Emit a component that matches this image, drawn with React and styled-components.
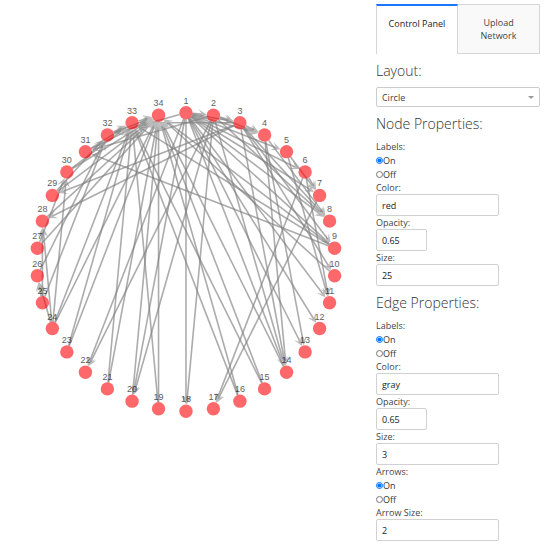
import React, { useState } from 'react'
import styled, { createGlobalStyle } from 'styled-components'

const GlobalStyle = createGlobalStyle`
* {
    box-sizing: border-box;
}

body {
    margin: 0;
    background-color: white;
    color: #444;
    font-family: "Open Sans", sans-serif;
    font-size: 9px;
    line-height: 13px;
}
`

const Page = styled.div`
display: grid;
grid-template-columns: 68% 30%;
column-gap: 4px;
align-items: start;
`

const Graph = styled.svg`
display: block;
width: 100%;
height: auto;
font-family: "Liberation Sans", sans-serif;
font-size: 9px;
`

const Panel = styled.aside`
padding-top: 4px;
`

const Tabs = styled.div`
display: flex;
`

const Tab = styled.button`
flex: 0 0 50%;
display: flex;
justify-content: center;
align-items: flex-start;
padding: 11px 10px;
border: 1px solid #d6d6d6;
border-left-width: ${(p) => (p.$active ? '1px' : '0')};
background-color: #f9f9f9;
color: #444;
font: inherit;
cursor: pointer;

${(p) => p.$active && `
    border-top: 2px solid #1975fa;
    border-bottom: 0;
    background-color: white;
    color: #222;
`}
`

const Title = styled.h2`
margin: 7px 0 6px;
font-size: 14px;
font-weight: 300;
line-height: 20px;
color: #333;
`

const SelectBox = styled.div`
position: relative;

&::after {
    content: '';
    position: absolute;
    top: 9px;
    right: 6px;
    border: 3px solid transparent;
    border-top-color: #999;
    border-bottom: 0;
    pointer-events: none;
}
`

const Select = styled.select`
display: block;
appearance: none;
width: 100%;
height: 20px;
padding: 0 5px;
border: 1px solid #ccc;
border-radius: 2px;
background-color: white;
color: #444;
font: inherit;
`

const Label = styled.label`
display: block;
`

const Input = styled.input`
display: block;
width: ${(p) => (p.$short ? '31%' : '75%')};
height: 22px;
padding: 0 5px;
border: 1px solid #d1d1d1;
border-radius: 2px;
background-color: white;
color: #222;
font: inherit;
`

const Options = styled.fieldset`
margin: 0;
padding: 0;
border: 0;
min-width: 0;
`

const Legend = styled.legend`
padding: 0;
`

const Option = styled.label`
display: flex;
align-items: center;
height: 14px;
color: #333;
`

const Radio = styled.input`
width: 7px;
height: 7px;
margin: 0;
accent-color: #0075ff;
`

const COUNT = 34
const CENTER_X = 186
const CENTER_Y = 262
const RADIUS = 149.3
const NODE_RADIUS = 6.7

// friendships of the karate club, source -> targets
const links = {
    1: [2, 3, 4, 5, 6, 7, 8, 9, 11, 12, 13, 14, 18, 20, 22, 32],
    2: [3, 4, 8, 14, 18, 20, 22, 31],
    3: [4, 8, 9, 10, 14, 28, 29, 33],
    4: [8, 13, 14],
    5: [7, 11],
    6: [7, 11, 17],
    7: [17],
    9: [31, 33, 34],
    10: [34],
    14: [34],
    15: [33, 34],
    16: [33, 34],
    19: [33, 34],
    20: [34],
    21: [33, 34],
    23: [33, 34],
    24: [26, 28, 30, 33, 34],
    25: [26, 28, 32],
    26: [32],
    27: [30, 34],
    28: [34],
    29: [32, 34],
    30: [33, 34],
    31: [33, 34],
    32: [33, 34],
    33: [34],
}

const nodes = Array.from({ length: COUNT }, (_, i) => {
    const angle = (2 * Math.PI * i) / COUNT
    return {
        id: i + 1,
        x: CENTER_X + RADIUS * Math.sin(angle),
        y: CENTER_Y - RADIUS * Math.cos(angle),
    }
})

const edges = Object.entries(links).flatMap(([from, targets]) =>
    targets.map((to) => ({ from: nodes[from - 1], to: nodes[to - 1] }))
)

const Edge = ({ from, to }) => {
    const dx = to.x - from.x
    const dy = to.y - from.y
    const length = Math.hypot(dx, dy)
    const turn = (Math.atan2(dy, dx) * 180) / Math.PI
    const tip = length - NODE_RADIUS

    return (
        <g transform={`translate(${from.x} ${from.y}) rotate(${turn})`}>
            <path d={`M${NODE_RADIUS} 0H${tip - 3}`} stroke="gray" strokeWidth="1.6" opacity="0.65" />
            <path d={`M${tip} 0l-9 -4.6l4.5 4.6l-4.5 4.6z`} fill="#bbb" />
        </g>
    )
}

const Network = () => (
    <Graph viewBox="0 0 372 524" role="img" aria-label="Network">
        {edges.map((e) => (
            <Edge key={`${e.from.id}-${e.to.id}`} from={e.from} to={e.to} />
        ))}
        {nodes.map((n) => (
            <g key={n.id}>
                <circle cx={n.x} cy={n.y} r={NODE_RADIUS} fill="#ff0408" opacity="0.6" />
                <text x={n.x} y={n.y - 9} textAnchor="middle" opacity="0.65">{n.id}</text>
            </g>
        ))}
    </Graph>
)

const OnOff = ({ title, name }) => {
    const [value, setValue] = useState('On')

    return (
        <Options>
            <Legend>{title}</Legend>
            {['On', 'Off'].map((option) => (
                <Option key={option}>
                    <Radio
                        type="radio"
                        name={name}
                        checked={value === option}
                        onChange={() => setValue(option)}
                    />
                    {option}
                </Option>
            ))}
        </Options>
    )
}

const Field = ({ title, id, value, short }) => (
    <>
        <Label htmlFor={id}>{title}</Label>
        <Input id={id} defaultValue={value} $short={short} />
    </>
)

const App = () => {
    const [tab, setTab] = useState('control')

    return (
        <>
            <GlobalStyle />
            <Page>
                <Network />
                <Panel>
                    <Tabs>
                        <Tab $active={tab === 'control'} onClick={() => setTab('control')}>Control Panel</Tab>
                        <Tab $active={tab === 'upload'} onClick={() => setTab('upload')}>Upload Network</Tab>
                    </Tabs>
                    <Title><label htmlFor="layout">Layout:</label></Title>
                    <SelectBox>
                        <Select id="layout">
                            <option>Circle</option>
                            <option>Grid</option>
                            <option>Random</option>
                        </Select>
                    </SelectBox>
                    <Title>Node Properties:</Title>
                    <OnOff title="Labels:" name="node-labels" />
                    <Field title="Color:" id="node-color" value="red" />
                    <Field title="Opacity:" id="node-opacity" value="0.65" short />
                    <Field title="Size:" id="node-size" value="25" />
                    <Title>Edge Properties:</Title>
                    <OnOff title="Labels:" name="edge-labels" />
                    <Field title="Color:" id="edge-color" value="gray" />
                    <Field title="Opacity:" id="edge-opacity" value="0.65" short />
                    <Field title="Size:" id="edge-size" value="3" />
                    <OnOff title="Arrows:" name="arrows" />
                    <Field title="Arrow Size:" id="arrow-size" value="2" />
                </Panel>
            </Page>
        </>
    )
}

export default App
